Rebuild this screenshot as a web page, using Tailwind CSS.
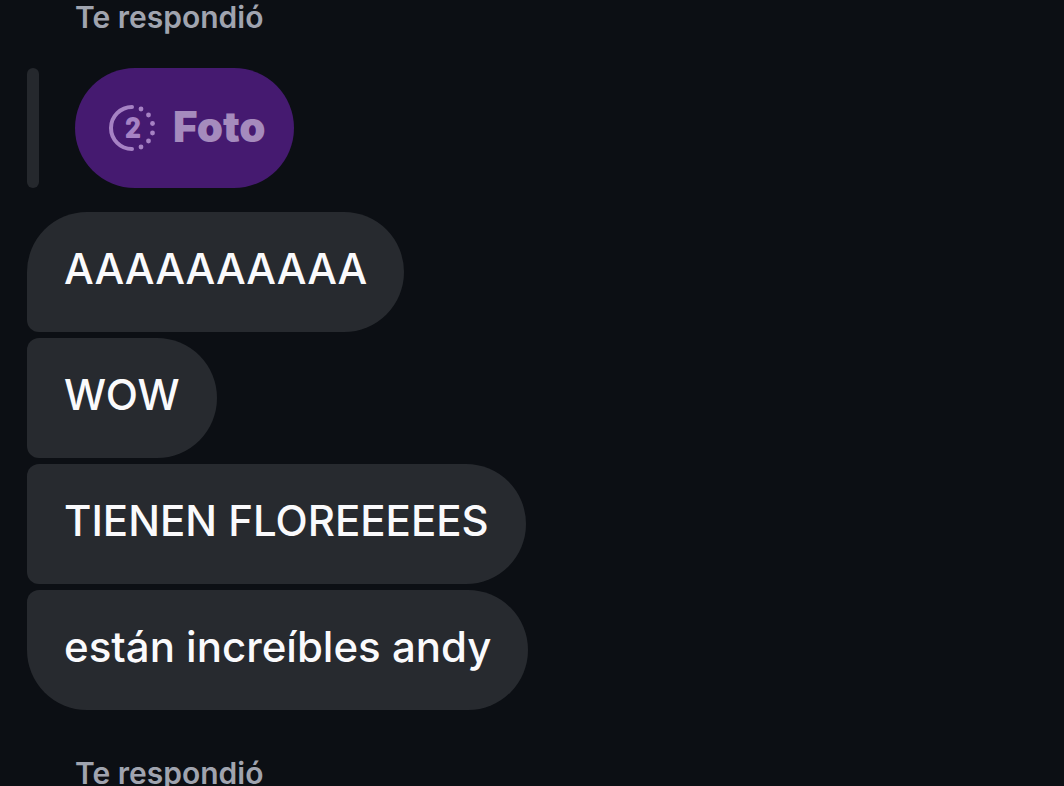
<!DOCTYPE html>
<html lang="es">
<head>
  <meta charset="UTF-8" />
  <meta name="viewport" content="width=device-width, initial-scale=1.0" />
  <title>Chat</title>
  <script src="https://cdn.jsdelivr.net/npm/@tailwindcss/browser@4"></script>
</head>
<body class="min-h-screen overflow-hidden bg-[#0c0f14] font-['Inter','Liberation_Sans',sans-serif]">

  <main class="px-[27px]">

    <!-- Respuesta a una foto -->
    <section>
      <p class="pl-12 text-[30px] leading-[35px] font-semibold text-[#a0a4af]">Te respondió</p>

      <div class="mt-[33px] flex gap-9">
        <div class="w-3 rounded-full bg-[#25282d]"></div>
        <button type="button" class="flex h-[120px] items-center gap-4 rounded-full bg-[#451a70] pr-7 pl-8 text-[42px] leading-[50px] font-black text-[#a58bbd]">
          <!-- Icono de foto que se puede ver dos veces -->
          <svg class="size-[50px]" viewBox="0 0 50 50" fill="none" aria-hidden="true">
            <path d="M25 4A21 21 0 0 0 25 46" stroke="#a682c4" stroke-width="4" stroke-linecap="round" />
            <g fill="#a682c4">
              <circle cx="34" cy="6" r="2.4" />
              <circle cx="41.5" cy="12" r="2.4" />
              <circle cx="45.5" cy="20.5" r="2.4" />
              <circle cx="45.5" cy="30" r="2.4" />
              <circle cx="41.5" cy="38" r="2.4" />
              <circle cx="34" cy="44" r="2.4" />
              <text x="26" y="34" text-anchor="middle" font-size="25" font-weight="500" stroke="#a682c4" stroke-width="2" stroke-linejoin="round">2</text>
            </g>
          </svg>
          <span class="pb-0.5">Foto</span>
        </button>
      </div>
    </section>

    <!-- Mensajes -->
    <ul class="mt-6 flex flex-col items-start gap-1.5 text-[42px] leading-[50px] font-medium text-[#fafafc]">
      <li class="rounded-[60px] rounded-bl-xl bg-[#272a2f] px-[37px] pt-8 pb-[38px]">AAAAAAAAAA</li>
      <li class="rounded-[60px] rounded-l-xl bg-[#272a2f] px-[37px] pt-8 pb-[38px]">WOW</li>
      <li class="rounded-[60px] rounded-l-xl bg-[#272a2f] px-[37px] pt-8 pb-[38px]">TIENEN FLOREEEEES</li>
      <li class="rounded-[60px] rounded-tl-xl bg-[#272a2f] px-[37px] pt-8 pb-[38px]">están increíbles andy</li>
    </ul>

    <p class="mt-[46px] pl-12 text-[30px] leading-[35px] font-semibold text-[#a0a4af]">Te respondió</p>
  </main>

</body>
</html>
